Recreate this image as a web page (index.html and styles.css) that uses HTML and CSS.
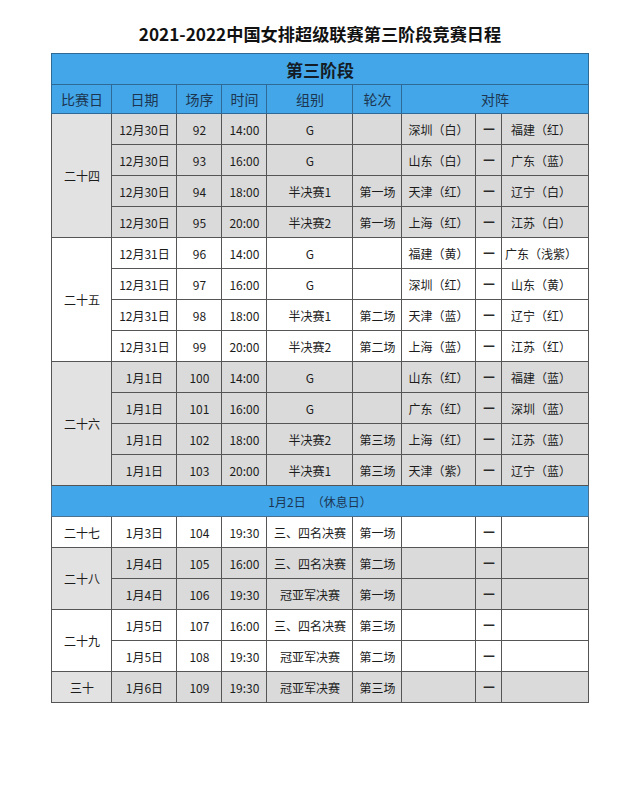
FILE: index.html
```html
<!DOCTYPE html>
<html lang="zh-CN">
<head>
<meta charset="utf-8">
<title>2021-2022中国女排超级联赛第三阶段竞赛日程</title>
<link rel="stylesheet" href="styles.css">
</head>
<body>
<div class="page">
  <h1 class="title">2021-2022中国女排超级联赛第三阶段竞赛日程</h1>
  <table class="schedule">
    <colgroup>
      <col class="c-day"><col class="c-date"><col class="c-no"><col class="c-time"><col class="c-group"><col class="c-round"><col class="c-home"><col class="c-vs"><col class="c-away">
    </colgroup>
    <thead>
      <tr class="phase-row"><th colspan="9" class="phase">第三阶段</th></tr>
      <tr class="head-row">
        <th>比赛日</th><th>日期</th><th>场序</th><th>时间</th><th>组别</th><th>轮次</th><th colspan="3">对阵</th>
      </tr>
    </thead>
    <tbody class="grey">
      <tr><td rowspan="4" class="day">二十四</td><td>12月30日</td><td>92</td><td>14:00</td><td>G</td><td></td><td class="home">深圳（白）</td><td class="vs">—</td><td class="away">福建（红）</td></tr>
      <tr><td>12月30日</td><td>93</td><td>16:00</td><td>G</td><td></td><td class="home">山东（白）</td><td class="vs">—</td><td class="away">广东（蓝）</td></tr>
      <tr><td>12月30日</td><td>94</td><td>18:00</td><td>半决赛1</td><td>第一场</td><td class="home">天津（红）</td><td class="vs">—</td><td class="away">辽宁（白）</td></tr>
      <tr><td>12月30日</td><td>95</td><td>20:00</td><td>半决赛2</td><td>第一场</td><td class="home">上海（红）</td><td class="vs">—</td><td class="away">江苏（白）</td></tr>
    </tbody>
    <tbody class="white">
      <tr><td rowspan="4" class="day">二十五</td><td>12月31日</td><td>96</td><td>14:00</td><td>G</td><td></td><td class="home">福建（黄）</td><td class="vs">—</td><td class="away">广东（浅紫）</td></tr>
      <tr><td>12月31日</td><td>97</td><td>16:00</td><td>G</td><td></td><td class="home">深圳（红）</td><td class="vs">—</td><td class="away">山东（黄）</td></tr>
      <tr><td>12月31日</td><td>98</td><td>18:00</td><td>半决赛1</td><td>第二场</td><td class="home">天津（蓝）</td><td class="vs">—</td><td class="away">辽宁（红）</td></tr>
      <tr><td>12月31日</td><td>99</td><td>20:00</td><td>半决赛2</td><td>第二场</td><td class="home">上海（蓝）</td><td class="vs">—</td><td class="away">江苏（红）</td></tr>
    </tbody>
    <tbody class="grey">
      <tr><td rowspan="4" class="day">二十六</td><td>1月1日</td><td>100</td><td>14:00</td><td>G</td><td></td><td class="home">山东（红）</td><td class="vs">—</td><td class="away">福建（蓝）</td></tr>
      <tr><td>1月1日</td><td>101</td><td>16:00</td><td>G</td><td></td><td class="home">广东（红）</td><td class="vs">—</td><td class="away">深圳（蓝）</td></tr>
      <tr><td>1月1日</td><td>102</td><td>18:00</td><td>半决赛2</td><td>第三场</td><td class="home">上海（红）</td><td class="vs">—</td><td class="away">江苏（蓝）</td></tr>
      <tr><td>1月1日</td><td>103</td><td>20:00</td><td>半决赛1</td><td>第三场</td><td class="home">天津（紫）</td><td class="vs">—</td><td class="away">辽宁（蓝）</td></tr>
    </tbody>
    <tbody class="rest">
      <tr><td colspan="9" class="rest-day">1月2日　（休息日）</td></tr>
    </tbody>
    <tbody class="white">
      <tr><td class="day">二十七</td><td>1月3日</td><td>104</td><td>19:30</td><td>三、四名决赛</td><td>第一场</td><td class="home"></td><td class="vs">—</td><td class="away"></td></tr>
    </tbody>
    <tbody class="grey">
      <tr><td rowspan="2" class="day">二十八</td><td>1月4日</td><td>105</td><td>16:00</td><td>三、四名决赛</td><td>第二场</td><td class="home"></td><td class="vs">—</td><td class="away"></td></tr>
      <tr><td>1月4日</td><td>106</td><td>19:30</td><td>冠亚军决赛</td><td>第一场</td><td class="home"></td><td class="vs">—</td><td class="away"></td></tr>
    </tbody>
    <tbody class="white">
      <tr><td rowspan="2" class="day">二十九</td><td>1月5日</td><td>107</td><td>16:00</td><td>三、四名决赛</td><td>第三场</td><td class="home"></td><td class="vs">—</td><td class="away"></td></tr>
      <tr><td>1月5日</td><td>108</td><td>19:30</td><td>冠亚军决赛</td><td>第二场</td><td class="home"></td><td class="vs">—</td><td class="away"></td></tr>
    </tbody>
    <tbody class="grey">
      <tr><td class="day">三十</td><td>1月6日</td><td>109</td><td>19:30</td><td>冠亚军决赛</td><td>第三场</td><td class="home"></td><td class="vs">—</td><td class="away"></td></tr>
    </tbody>
  </table>
</div>
</body>
</html>
```

FILE: styles.css
```css
html, body {
  margin: 0;
  padding: 0;
  background: #ffffff;
}

body {
  font-family: "Noto Sans CJK SC", "Noto Sans", sans-serif;
  color: #1c1c1c;
}

.page {
  padding-top: 22px;
}

.title {
  margin: 0 0 7px;
  text-align: center;
  font-size: 17.2px;
  line-height: 24px;
  font-weight: bold;
  color: #111111;
}

.schedule {
  margin: 0 auto;
  width: 536px;
  table-layout: fixed;
  border-collapse: collapse;
  font-size: 12px;
  border-right: 1px solid #9a9a9a;
}

.c-day { width: 60px; }
.c-date { width: 65px; }
.c-no { width: 45px; }
.c-time { width: 45px; }
.c-group { width: 86px; }
.c-round { width: 49px; }
.c-home { width: 74px; }
.c-vs { width: 26px; }
.c-away { width: 86px; }

.schedule th,
.schedule td {
  padding: 0;
  border: 1px solid #555555;
  text-align: center;
  vertical-align: middle;
  white-space: nowrap;
  overflow: hidden;
}

.schedule th {
  background: #43a6e8;
  border-color: #2f6a96;
  font-weight: normal;
  font-size: 14px;
  color: #1c3550;
}

.phase-row {
  height: 31px;
}

.schedule th.phase {
  font-size: 17px;
  font-weight: bold;
  color: #141c26;
}

.head-row {
  height: 29px;
}

.schedule tbody tr {
  height: 31px;
}

.grey td {
  background: #dadada;
}

.grey td.day {
  background: #e2e2e2;
}

.white td {
  background: #ffffff;
}

.schedule td.home {
  text-align: left;
  padding-left: 6px;
}

.schedule td.vs {
  font-family: "DejaVu Sans", sans-serif;
  font-weight: bold;
  font-size: 12px;
  color: #2a2a2a;
}

.schedule td.away {
  padding-right: 8px;
}

.schedule td.rest-day {
  background: #41a6ea;
  border-color: #4b6f8c;
  color: #1c3550;
}
```
